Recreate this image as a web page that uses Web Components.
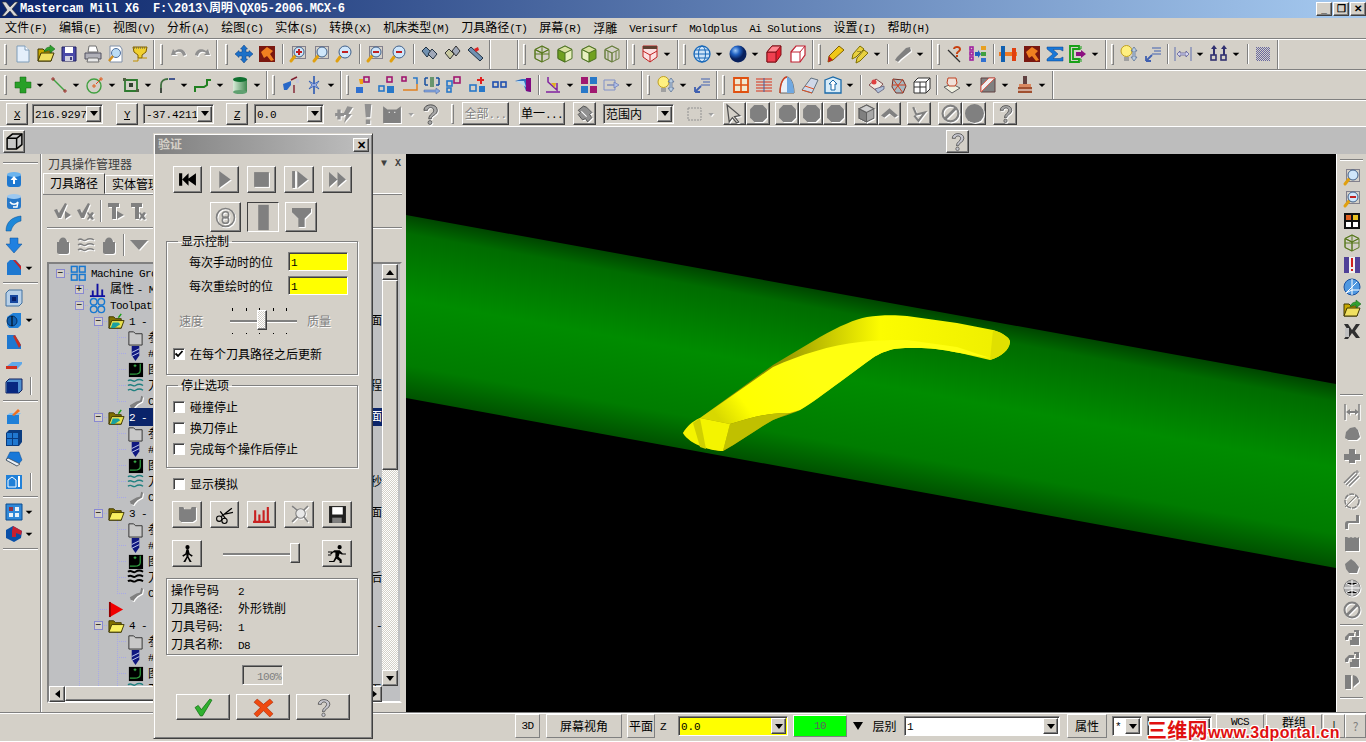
<!DOCTYPE html>
<html>
<head>
<meta charset="utf-8">
<title>Mastercam Mill X6</title>
<style>
  html, body { margin: 0; height: 742px; overflow: hidden; background: #d4d0c8; }
  body { font: 12px/16px "Noto Sans CJK SC", sans-serif; color: #000; }
  #app { display: flex; flex-direction: column; height: 742px; position: relative; }
  .work { display: flex; height: 558px; }
  .row3 { display: flex; align-items: center; }
</style>
</head>
<body>
<div id="app">
  <x-titlebar text="Mastercam Mill X6  F:\2013\周明\QX05-2006.MCX-6"></x-titlebar>
  <x-menubar>
    <x-menu text="文件(F)"></x-menu><x-menu text="编辑(E)"></x-menu><x-menu text="视图(V)"></x-menu><x-menu text="分析(A)"></x-menu><x-menu text="绘图(C)"></x-menu><x-menu text="实体(S)"></x-menu><x-menu text="转换(X)"></x-menu><x-menu text="机床类型(M)"></x-menu><x-menu text="刀具路径(T)"></x-menu><x-menu text="屏幕(R)"></x-menu><x-menu text="浮雕"></x-menu><x-menu text="Verisurf"></x-menu><x-menu text="Moldplus"></x-menu><x-menu text="Ai Solutions"></x-menu><x-menu text="设置(I)"></x-menu><x-menu text="帮助(H)"></x-menu>
  </x-menubar>
  <x-toolrow h="31">
    <x-toolbar items="new open save print preview funnel"></x-toolbar>
    <x-toolbar items="gundo gredo" ml="1"></x-toolbar>
    <x-toolbar items="move fit | zin zwin zmag | zdot zout | bin1 bin2 bin3" ml="3"></x-toolbar>
    <x-toolbar bare w="28"></x-toolbar>
    <x-toolbar items="c1 c2 c3 c4"></x-toolbar>
    <x-toolbar items="cubeR+"></x-toolbar>
    <x-toolbar items="globe+ sphere+ boxR boxW"></x-toolbar>
    <x-toolbar items="pencil pencils+ | gwrench+" w="119"></x-toolbar>
    <x-toolbar items="qline bars | tb1 fit sigma gbox+" w="174"></x-toolbar>
    <x-toolbar items="bulb arrows | dim+ arrowsup+ | dither"></x-toolbar>
  </x-toolrow>
  <x-toolrow h="30">
    <x-toolbar items="plus+ line+ circ+ rectp+ fillet+ spline+ cyl+" w="268"></x-toolbar>
    <x-toolbar items="tool1 star+" w="74"></x-toolbar>
    <x-toolbar items="x1 x2 x3 x4 x5 x6 x7 x8 | corner+ four pale+" pitch="22.7" w="301"></x-toolbar>
    <x-toolbar items="bulb+ arrows" w="75"></x-toolbar>
    <x-toolbar items="gridR lines dome wedge house+ | r1 r2 wire | r3+ r4+ r5+" pitch="23"></x-toolbar>
  </x-toolrow>
  <x-toolrow h="27" last>
    <div class="row3">
      <x-btn text="X" w="22" h="22" style="margin-left:6px" under></x-btn>
      <x-combo value="216.92978" w="71" style="margin-left:4px"></x-combo>
      <x-btn text="Y" w="22" h="22" style="margin-left:13px" under></x-btn>
      <x-combo value="-37.42116" w="71" style="margin-left:5px"></x-combo>
      <x-btn text="Z" w="22" h="22" style="margin-left:12px" under></x-btn>
      <x-combo value="0.0" w="70" style="margin-left:6px"></x-combo>
      <x-icon name="gplus" size="20" style="margin-left:9px;width:22px"></x-icon>
      <x-icon name="gex" size="20" style="margin-left:2px;width:22px"></x-icon>
      <x-icon name="gbox2" size="20" style="margin-left:2px;width:22px"></x-icon>
      <x-icon name="gtri" size="8" style="margin-left:4px"></x-icon>
      <x-icon name="gq" size="22" style="margin-left:4px"></x-icon>
      <x-grip style="margin-left:10px"></x-grip>
      <x-btn text="全部..." w="47" h="23" dis style="margin-left:8px"></x-btn>
      <x-btn text="单一..." w="46" h="23" style="margin-left:10px"></x-btn>
      <x-btn icon="gear" w="23" h="23" style="margin-left:8px"></x-btn>
      <x-combo value="范围内" w="71" style="margin-left:7px"></x-combo>
      <x-icon name="dashed" style="margin-left:12px"></x-icon>
      <x-icon name="gtri" size="8" style="margin-left:3px"></x-icon>
      <x-btn icon="gcursor" w="23" h="23" style="margin-left:8px"></x-btn>
      <x-btn icon="ghex" w="24" h="23"></x-btn>
      <x-btn icon="ghex" w="24" h="23" style="margin-left:5px"></x-btn>
      <x-btn icon="ghex" w="24" h="23"></x-btn>
      <x-btn icon="ghex" w="24" h="23"></x-btn>
      <x-btn icon="gcube" w="24" h="23" style="margin-left:7px"></x-btn>
      <x-btn icon="gup" w="23" h="23"></x-btn>
      <x-btn icon="gcheck" w="24" h="23" style="margin-left:6px"></x-btn>
      <x-btn icon="gstop" w="24" h="23" style="margin-left:7px"></x-btn>
      <x-btn icon="gdot" w="24" h="23"></x-btn>
      <x-btn icon="gq" w="24" h="23" style="margin-left:7px"></x-btn>
    </div>
  </x-toolrow>
  <x-strip>
    <x-btn icon="wirecube" w="22" h="23" style="margin-left:3px"></x-btn>
    <x-btn icon="qq" w="23" h="23" style="margin-left:921px"></x-btn>
  </x-strip>
  <div class="work">
    <x-sidebar w="42" ix="14" top="5" items="- ^ blueup bluerot bluebend bluedown boxred+ - inset disc+ chamfer plate dbox! - lift win flip home! - grid+ redbox+ -"></x-sidebar>
    <x-manager>
      <x-tree-row level="0" exp="-" icon="grid4" label="Machine Group-1"></x-tree-row>
      <x-tree-row level="1" exp="+" icon="chart" label="属性 - Mill"></x-tree-row>
      <x-tree-row level="1" exp="-" icon="circles" label="Toolpath Group-1"></x-tree-row>
      <x-tree-row level="2" exp="-" icon="foldcheck" label="1 -" tail="面"></x-tree-row>
      <x-tree-row level="3" icon="fold" label="参数"></x-tree-row>
      <x-tree-row level="3" icon="drill" label="#1"></x-tree-row>
      <x-tree-row level="3" icon="geom" label="图形"></x-tree-row>
      <x-tree-row level="3" icon="waves" label="刀具路径" tail="程"></x-tree-row>
      <x-tree-row level="3" icon="gtool" label="C" last></x-tree-row>
      <x-tree-row level="2" exp="-" icon="foldcheck" label="2 -" tail=".面" sel></x-tree-row>
      <x-tree-row level="3" icon="fold" label="参数"></x-tree-row>
      <x-tree-row level="3" icon="drill" label="#1"></x-tree-row>
      <x-tree-row level="3" icon="geom" label="图形"></x-tree-row>
      <x-tree-row level="3" icon="waves" label="刀具路径" tail="秒"></x-tree-row>
      <x-tree-row level="3" icon="gtool" label="C" last></x-tree-row>
      <x-tree-row level="2" exp="-" icon="foldopen" label="3 -" tail=".面"></x-tree-row>
      <x-tree-row level="3" icon="fold" label="参数"></x-tree-row>
      <x-tree-row level="3" icon="drill" label="#1"></x-tree-row>
      <x-tree-row level="3" icon="geom" label="图形"></x-tree-row>
      <x-tree-row level="3" icon="wavesk" label="刀具路径" tail="具后"></x-tree-row>
      <x-tree-row level="3" icon="gtool" label="C" last></x-tree-row>
      <x-tree-row level="2" icon="redtri" label=""></x-tree-row>
      <x-tree-row level="2" exp="-" icon="foldopen" label="4 -" tail="-"></x-tree-row>
      <x-tree-row level="3" icon="fold" label="参数"></x-tree-row>
      <x-tree-row level="3" icon="drill" label="#1"></x-tree-row>
      <x-tree-row level="3" icon="geom" label="图形"></x-tree-row>
      <x-tree-row level="3" icon="waves" label="刀具路径" tail="五"></x-tree-row>
    </x-manager>
    <x-viewport></x-viewport>
    <x-sidebar w="30" ix="15" top="2" light items="- ^ zwin zdot colorgrid c1 savered netball open mx ~ - ^ gdim gcloud gplus2 glines gcirc gcorner gsq gblob gball gstop _ gsteps gsteps gdoor ^ - ^ ^ gup"></x-sidebar>
  </div>
  <x-statusbar></x-statusbar>

  <x-dialog text="验证">
    <x-flow gap="8" ml="19" mt="12">
      <x-btn icon="dfirst" w="29" h="27"></x-btn><x-btn icon="dplay" w="29" h="27"></x-btn><x-btn icon="dstop" w="29" h="27"></x-btn><x-btn icon="dstep" w="30" h="27"></x-btn><x-btn icon="dff" w="30" h="27"></x-btn>
    </x-flow>
    <x-flow gap="6" ml="56" mt="9">
      <x-btn icon="dspiral" w="31" h="30"></x-btn><x-btn icon="dbar" w="32" h="30" pressed></x-btn><x-btn icon="dfun" w="32" h="30"></x-btn>
    </x-flow>
    <x-group text="显示控制" h="140" mt="3">
      <x-field text="每次手动时的位" value="1" mt="5"></x-field>
      <x-field text="每次重绘时的位" value="1" mt="5"></x-field>
      <x-flow ml="6" mt="13" gap="0" center>
        <x-label text="速度" dis w="51"></x-label><x-slider w="67" thumb="27" ticks></x-slider><x-label text="质量" dis ml="10"></x-label>
      </x-flow>
      <x-check text="在每个刀具路径之后更新" checked mt="12"></x-check>
    </x-group>
    <x-group text="停止选项" h="89" mt="4">
      <x-check text="碰撞停止" mt="8"></x-check>
      <x-check text="换刀停止" mt="5"></x-check>
      <x-check text="完成每个操作后停止" mt="5"></x-check>
    </x-group>
    <x-check text="显示模拟" mt="8" ml="19"></x-check>
    <x-flow gap="8" ml="18" mt="9">
      <x-btn icon="dstock" w="30" h="27"></x-btn><x-btn icon="dscis" w="29" h="27"></x-btn><x-btn icon="dhist" w="29" h="27"></x-btn><x-btn icon="dmag" w="30" h="27"></x-btn><x-btn icon="dsave" w="30" h="27"></x-btn>
    </x-flow>
    <x-flow ml="18" mt="12" center>
      <x-btn icon="dwalk" w="30" h="27"></x-btn><x-slider w="77" thumb="67" big style="margin-left:21px"></x-slider><x-btn icon="drun" w="30" h="27" style="margin-left:22px"></x-btn>
    </x-flow>
    <x-infobox>
      <x-info k="操作号码" v="2"></x-info>
      <x-info k="刀具路径:" v="外形铣削"></x-info>
      <x-info k="刀具号码:" v="1"></x-info>
      <x-info k="刀具名称:" v="D8"></x-info>
    </x-infobox>
    <x-progress text="100%"></x-progress>
    <x-flow gap="6" ml="22" mt="9">
      <x-btn icon="ok" w="54" h="26"></x-btn><x-btn icon="cancel" w="54" h="26"></x-btn><x-btn icon="qq" w="54" h="26"></x-btn>
    </x-flow>
  </x-dialog>
</div>

<script>
const RAISED = 'border:1px solid;border-color:#fff #404040 #404040 #fff;box-shadow:inset -1px -1px #808080;box-sizing:border-box;background:#d4d0c8;';
const SUNK = 'border:1px solid;border-color:#808080 #fff #fff #808080;box-shadow:inset 1px 1px #404040;box-sizing:border-box;';
const MONO = `.l{font:11px/16px "Liberation Mono",monospace;letter-spacing:-.6px}`;

// ascii runs are 6px wide in the original bitmap font
const T = s => s.replace(/[\x21-\x7e]+( [\x21-\x7e]+)*/g, m => `<span class="l">${m}</span>`);

const P = (d, f, s = 'none', w = 1) => `<path d="${d}" fill="${f}" stroke="${s}" stroke-width="${w}"/>`;
const G = '#808080';
const mag = (cx, cy, r, inner = '') =>
  `<path d="M${cx-r+1} ${cy+r-1}L2 16" stroke="#e0a010" stroke-width="3" stroke-linecap="round"/>` +
  `<circle cx="${cx}" cy="${cy}" r="${r}" fill="#cfe6fa" stroke="#40608a"/>` + inner;
const dots = '<rect x="3.5" y="1.5" width="13" height="12" fill="none" stroke="#303050" stroke-dasharray="1 1"/>';
const cube = (st, top, l, r) =>
  P('M9 1l7 3.5v9L9 17l-7-3.5v-9z', r, st) + P('M2 4.5L9 8v9l-7-3.5z', l, st) + P('M9 1l7 3.5L9 8 2 4.5z', top, st);
const sq = (x, y, c, s = 6) => `<rect x="${x}" y="${y}" width="${s}" height="${s}" fill="none" stroke="${c}" stroke-width="1.6"/>`;
const fill = (x, y, c, w = 7, h = 7) => `<rect x="${x}" y="${y}" width="${w}" height="${h}" fill="${c}"/>`;
const hex = P('M5 1h8l4 4v8l-4 4H5l-4-4V5z', G);
const folder = (a, b) => P('M1 4h5l2 2h6v10H1z', a, '#403800') + P('M4 8h13l-3 8H1z', b, '#403800');
const ques = c => P('M4 6c0-6 11-6 11 0 0 4-5 4-5 7h-2c0-4 4-4 4-7 0-3-5-3-5 0z', c, '#404040', .7) + `<circle cx="9" cy="16" r="1.6" fill="${c}" stroke="#404040" stroke-width=".6"/>`;
const person = 'M9 1a2 2 0 110 4 2 2 0 010-4zM8 5h2l1 4 3 2-1 1-3-2v2l3 5h-2l-2-4-2 4H5l3-5v-2l-3 2-1-1 3-2z';

const ICONS = {
  new: P('M3 1h8l4 4v12H3z', '#e4effb', '#7f9db9') + P('M11 1v4h4', '#fff', '#7f9db9'),
  open: folder('#c8a800', '#f0e060') + P('M7 7c1-4 4-5 6-5V0l5 4-5 4V5c-2 0-4 1-6 2z', '#30a030', '#106010', .5),
  save: P('M2 2h14v14H2z', '#4a4aa8', '#202060') + fill(5, 2, '#fff', 8, 6) + fill(5, 11, '#d0d0e0', 8, 5) + fill(10, 12, '#404080', 2, 3),
  print: P('M5 1h7l2 6H4z', '#fff', '#707070') + P('M1 8h16v6H1z', '#b0b0b8', '#505060') + P('M4 13h10l1 4H3z', '#e8e8e8', '#707070'),
  preview: P('M3 1h10l2 3v13H3z', '#fff', '#8090a8') + `<circle cx="9" cy="8" r="4.5" fill="#bcdcf4" stroke="#5070a0"/><path d="M6 11l-4 5" stroke="#d09020" stroke-width="2.5"/>`,
  funnel: P('M2 2h14l-1 5-4 3v3H7v-3L3 7z', '#f0d030', '#806000') + '<path d="M7 13v3H2M11 13h5" stroke="#c09000" fill="none"/><path d="M3 3h12" stroke="#505050" stroke-dasharray="1 1"/>',
  gundo: P('M3 4l-2 6 6 0-2-2c3-2 7-2 8 3l3-1c-1-6-7-7-11-4z', '#909090'),
  gredo: P('M15 4l2 6-6 0 2-2c-3-2-7-2-8 3l-3-1c1-6 7-7 11-4z', '#909090'),
  move: P('M9 0l3.5 4H11v3h3V5.500l4 3.500-4 3.500V11h-3v3h1.500L9 18l-3.500-4H7v-3H4v1.500L0 9l4-3.500V7h3V4H5.500z', '#1c70c8', '#0a3c80', .5),
  fit: fill(1, 1, '#7a1810', 16, 16) + P('M3 7l6-5 6 4-3 3 4 6-3 1-4-5-3 2z', '#f08020'),
  zin: dots + mag(10, 7, 5, fill(7, 6, '#c02020', 6, 2) + fill(9, 4, '#c02020', 2, 6)),
  zwin: dots + mag(10, 7, 5),
  zmag: mag(10, 7, 6, fill(7, 6, '#c02020', 6, 2)),
  zdot: dots + mag(10, 7, 5, fill(7, 6, '#c02020', 6, 2)),
  zout: mag(10, 7, 6, fill(7, 6, '#c02020', 6, 2)),
  bin1: P('M2 6l4-4 5 5-4 5z', '#7090b0', '#203040') + P('M8 9l4-5 5 5-4 5z', '#a0a8b8', '#203040'),
  bin2: P('M2 8l4-4 5 5-4 5z', '#c8c8a0', '#303030') + P('M9 6l4-5 4 5-4 5z', '#a0a8b8', '#303030'),
  bin3: P('M2 5l3-3 12 11-3 3z', '#7090b0', '#203040') + P('M8 4l4-2 1 3-3 2z', '#e02020'),
  c1: cube('#5a7a20', 'none', 'none', 'none') + '<path d="M9 8v9M2 4.500l7 3.500 7-3.500M2 9l14 0M9 1v7" stroke="#5a7a20" fill="none"/>',
  c2: cube('#4a7020', '#d8e0a0', '#70a020', '#e8f0c0'),
  c3: cube('#4a7020', '#d8e0a0', '#e8f0c0', '#70a020'),
  c4: cube('#6a8040', 'none', 'none', 'none') + '<path d="M9 8v9M5 6v9M13 6v9" stroke="#6a8040" fill="none"/>',
  cubeR: P('M2 1h14v11l-7 5-7-5z', '#fbe0e0', '#c02020') + fill(2, 1, '#604030', 14, 3) + '<path d="M2 6l7 4 7-4M9 10v7" stroke="#c02020" fill="none"/>',
  globe: '<circle cx="9" cy="9" r="8" fill="#cfe4f8" stroke="#1868b8" stroke-width="1.3"/><ellipse cx="9" cy="9" rx="3.500" ry="8" fill="none" stroke="#1868b8"/><path d="M1 9h16M2 5h14M2 13h14" stroke="#1868b8"/>',
  sphere: '<defs><radialGradient id="sph" cx=".35" cy=".3"><stop offset="0" stop-color="#9cc8f8"/><stop offset=".5" stop-color="#2060c0"/><stop offset="1" stop-color="#08205c"/></radialGradient></defs><circle cx="9" cy="9" r="8.500" fill="url(#sph)"/>',
  boxR: P('M2 7l5-6h9v9l-5 7H2z', '#e82030', '#801018') + P('M2 7h9v10H2z', '#f04050', '#801018') + P('M7 1h9l-5 6H2z', '#ff8890', '#801018'),
  boxW: P('M2 7l5-6h9v9l-5 7H2z', '#fff', '#c02030', 1.2) + '<path d="M2 7h9v10M11 7l5-6" stroke="#c02030" fill="none"/>',
  pencil: P('M12 1l5 4L6 15l-5 2 1-6z', '#f0c818', '#806000') + P('M1 17l1-6 4 4z', '#c02020'),
  pencils: P('M9 1l4 3L5 12l-4 2 1-5z', '#e8d040', '#807000') + P('M13 5l4 3-8 8-4 2 1-5z', '#e8d040', '#807000') + fill(6, 6, '#a09030', 5, 1),
  gwrench: P('M16 2l1 4-10 8-3 3-3-2 2-3 9-9z', G),
  qline: '<path d="M2 5l12 12" stroke="#303030" stroke-width="1.2"/>' + P('M7 4c0-4 8-4 8 0 0 3-3 3-3 5h-2c0-3 3-3 3-5 0-1.500-4-1.500-4 0z', '#c84010') + fill(10, 10, '#c84010', 2, 2),
  bars: sq(1, 2, '#a020a0', 3) + sq(1, 7, '#a020a0', 3) + sq(1, 12, '#a020a0', 3) + fill(12, 1, '#e8a020', 5, 4) + fill(12, 7, '#40a040', 5, 4) + fill(12, 13, '#3070d0', 5, 4) + P('M6 7h3V5l3 4-3 4v-2H6z', '#2060c0'),
  tb1: fill(0, 7, '#f07820', 18, 4) + fill(2, 1, '#1060b0', 4, 16) + fill(13, 3, '#e04010', 4, 13),
  sigma: P('M1 2h16v4l-3-1.500H7l5 4.500-5 4.500h7l3-1.500v4H1v-2l6-5-6-5z', '#1878d8', '#0a4088', .5),
  gbox: P('M1 1h9v3H4v10h6v3H1z', 'none', '#18a018', 1.8) + P('M6 4h6V1M6 14h6v3', 'none', '#18a018') + P('M7 7h5V5l5 4-5 4v-2H7z', '#8c1080'),
  bulb: '<circle cx="6.500" cy="6" r="5.500" fill="#fff080" stroke="#c0a020"/>' + fill(4, 12, '#a0a0a0', 5, 4) + P('M14 2l3 4h-2v6h2l-3 4-3-4h2V6h-2z', '#b8cce0', '#506890', .7),
  arrows: P('M2 16l6-6M2 16v-5M2 16h5', 'none', '#4060b0', 1.8) + '<path d="M8 3h9M10 6h7M8 9h9" stroke="#4060b0"/>',
  dim: '<path d="M1 2v14M17 2v14" stroke="#6070b0"/>' + P('M3 9l3-3v2h6V6l3 3-3 3v-2H6v2z', '#d8d8f0', '#505090', .7),
  arrowsup: sq(1, 10, '#303070', 5) + sq(11, 10, '#303070', 5) + P('M4 0l3 4H5v6H3V4H1zM14 0l3 4h-2v6h-2V4h-2z', '#303070'),
  dither: '<rect x="2" y="2" width="14" height="14" fill="url(#dth)"/><defs><pattern id="dth" width="2" height="2" patternUnits="userSpaceOnUse"><rect width="1" height="1" fill="#6868a0"/><rect x="1" y="1" width="1" height="1" fill="#6868a0"/></pattern></defs>',

  plus: P('M6 1h6v5h5v6h-5v5H6v-5H1V6h5z', '#28a028', '#106010', .5),
  line: '<path d="M3 3l12 12" stroke="#40a040" stroke-width="1.4"/><path d="M1 3h4M3 1v4M13 15h4M15 13v4" stroke="#a03030"/>',
  circ: '<circle cx="8" cy="10" r="7" fill="none" stroke="#40a040" stroke-width="1.4"/><path d="M10 8l5-5" stroke="#e04020"/><path d="M13 3h4M15 1v4M6 10h4M8 8v4" stroke="#e06020"/>',
  rectp: P('M3 4h12v11H3z', 'none', '#2f7a30', 1.8) + fill(7, 7, '#304030', 4, 4) + fill(1, 2, '#506040', 3, 3) + fill(14, 13, '#506040', 3, 3),
  fillet: P('M3 17V9c0-4 3-6 7-6', 'none', '#407040', 1.8) + '<path d="M11 3h6" stroke="#203880" stroke-width="1.6"/><path d="M3 12v5" stroke="#404040" stroke-width="1.6"/>',
  spline: P('M1 16v-5h9l3-2V4h4', 'none', '#208020', 2),
  cyl: '<rect x="2" y="3" width="14" height="13" fill="url(#cyg)"/><ellipse cx="9" cy="16" rx="7" ry="2" fill="#60a070"/><ellipse cx="9" cy="3.500" rx="7" ry="2.500" fill="#107030"/><defs><linearGradient id="cyg"><stop offset="0" stop-color="#d8ecd8"/><stop offset="1" stop-color="#408850"/></linearGradient></defs>',
  tool1: P('M1 8l8-3v4l-4 5H2z', '#2868c8') + '<path d="M9 4l6-3M12 9v8" stroke="#802030" stroke-width="1.4"/>' + fill(14, 3, '#c8c8d8', 3, 4),
  star: '<path d="M9 0v18" stroke="#2050b0" stroke-width="1.5"/>' + P('M4 5l5 3 5-3-3 4 3 4-5-3-5 3 3-4z', '#a8b8e8', '#2050b0', .7),
  x1: sq(9, 1, '#a01870', 5) + fill(1, 11, '#3070d0', 7, 6) + P('M4 3h4v5H5z', '#f0a010'),
  x2: sq(9, 1, '#a01870', 5) + sq(1, 10, '#2878c8', 5) + fill(9, 10, '#2878c8', 7, 7),
  x3: sq(1, 1, '#a01870', 4) + P('M12 2h4v6', 'none', '#2878c8', 1.5) + P('M2 14h14V8', 'none', '#e08020', 1.5),
  x4: '<path d="M8 1v10M10 1v10" stroke="#207030" stroke-width="1.2"/>' + P('M2 2h3M2 9h3M2 2v7M16 2h-3M16 9h-3M16 2v7', 'none', '#1850a0', 1.5) + P('M1 14h12v-2l4 3-4 3v-2H1z', '#88a8e0', '#4060a0', .5),
  x5: sq(8, 1, '#a01870', 6) + sq(1, 5, '#2878c8', 5) + sq(1, 12, '#2878c8', 4),
  x6: sq(1, 9, '#2878c8', 6) + fill(10, 10, '#2878c8', 6, 6) + fill(11, 1, '#e02020', 2, 7) + fill(8, 3, '#e02020', 7, 2),
  x7: sq(2, 6, '#2050b0', 5) + sq(10, 6, '#2050b0', 5),
  x8: P('M1 5l7-2h9v13l-5-1-3-8z', '#3070c0') + P('M12 2h5v14l-5-1z', '#800880') + P('M2 5h8l2 6z', '#b8d8f0'),
  corner: P('M4 1v5l9 8V7', 'none', '#8020a0', 1.5) + P('M2 16h14', 'none', '#8020a0', 1.5) + P('M7 7h5l-1 5z', '#e0b020'),
  four: fill(1, 1, '#a01870') + fill(10, 1, '#2878c8') + fill(1, 10, '#2878c8') + fill(10, 10, '#a01870'),
  pale: P('M1 4h11v10H1z', 'none', '#8090c8', 1) + P('M4 9h7V6l5 3-5 3V9z', '#b0c0e8', '#6878b8', .7),
  gridR: P('M2 2h14v14H2z', '#f0e8d0', '#e05010', 1.8) + '<path d="M9 2v14M2 9h14" stroke="#e05010" stroke-width="1.6"/>',
  lines: '<path d="M1 3h16M1 6h16M1 9h16M1 12h16M1 15h16" stroke="#d83018" stroke-width="1.1"/><path d="M9 2v14" stroke="#4060a0"/>',
  dome: P('M2 17C2 6 6 1 9 1s7 5 7 16z', '#e8f0f8', '#303030', .7) + P('M9 1c3 0 7 5 7 16H9z', '#70a8e0') + P('M2 17C2 6 6 1 9 1', 'none', '#d04020', 1.4),
  wedge: P('M1 14l9-12 7 2-6 13z', '#d0d8e8', '#607080') + '<path d="M1 14l10 3M4 10l9 3" stroke="#e05020"/>',
  house: P('M1 4l8-3 8 3v13H1z', '#d8ecf8', '#1868a8', 1.3) + P('M9 4l4 4h-2v6H7V8H5z', '#fff', '#1868a8'),
  r1: P('M2 9l7-6 7 5-6 7z', '#f0e8e0', '#805050') + '<circle cx="7" cy="6" r="2.500" fill="#e04040"/>' + P('M8 13l9-3v3l-6 4z', '#b0c0d8', '#505070', .7),
  r2: P('M3 3l10 1 3 6-3 7H6l-4-6z', '#a8b8c0', '#703028') + '<path d="M3 3l10 14M13 3L4 15M2 9l14 0" stroke="#d04020"/>',
  wire: P('M1 6l4-4h12v11l-4 4H1z', '#fff', '#303030') + '<path d="M1 6h12v11M13 6l4-4M7 6v11M1 11h12" stroke="#303030" fill="none"/>',
  r3: P('M1 11l8-3 8 4-8 5z', '#f0f0e0', '#606060') + P('M5 2h8l1 5-2 3H6L4 7z', '#f0e0d8', '#c04020'),
  r4: P('M2 2h14v14H2z', G, '#604040') + P('M2 10L10 2h6L2 16z', '#f0f0f0', '#e06050'),
  r5: fill(7, 0, '#604040', 4, 8) + fill(3, 8, '#d88860', 12, 3) + fill(2, 11, '#a05030', 14, 6) + '<path d="M2 14h14" stroke="#fff"/>',

  gplus: P('M1 8h2V5h3v3h3v3H6v3H3v-3H1zM12 2l5 1-4 6h3l-7 8 2-7H8z', '#909090'),
  gex: P('M6 0h6l-1 12H7zM7 14h4v4H7z', '#909090'),
  gbox2: P('M1 2l4 3h8l4-3v15H1z', G) + fill(6, 7, '#fff', 1, 1) + fill(11, 7, '#fff', 1, 1),
  gtri: '<path d="M3 7h12l-6 7z" fill="#a0a0a0"/>',
  arrow: '<path d="M4 7h10l-5 5z" fill="#000"/>',
  qq: ques('#c8c8d0'),
  gq: ques('#a8a8a8'),
  gear: P('M3 6l5-4 3 1 5 5-2 2 2 3-4 4-2-3-3 1-4-5 2-2z', '#909090', '#404040', .8) + '<path d="M6 7l5 5" stroke="#fff"/>',
  dashed: '<rect x="2" y="3" width="13" height="12" fill="none" stroke="#909090" stroke-dasharray="2 1"/>',
  gcursor: P('M2 1l12 10-5 1 4 5-2 1-4-5-3 4z', '#d4d0c8', '#505050', 1.2),
  ghex: hex,
  gcube: cube('#606060', '#d0d0d0', G, '#a8a8a8'),
  gup: P('M9 4l8 7-3 2-5-4-5 4-3-2z', G),
  gcheck: P('M3 3l3 7 8-2-6 8-4-5', 'none', G, 2),
  gstop: `<circle cx="9" cy="9" r="7.500" fill="none" stroke="${G}" stroke-width="2"/><path d="M4 14L14 4" stroke="${G}" stroke-width="2.500"/>`,
  gdot: `<circle cx="9" cy="9" r="9" fill="${G}"/>`,
  gchk1: P('M0 8l3-1 2 4 6-10 2 1-6 14H4z', G) + P('M11 9l6 4-6 4z', G),
  gchk2: P('M0 8l3-1 2 4 6-10 2 1-6 14H4z', G) + P('M11 10l2 2 2-2 2 1-2 3 2 3-2 1-2-2-2 2-1-1 2-3-2-3z', G),
  gT1: P('M1 1h11v4H9v12H5V5H1z', G) + P('M10 9l7 4-7 4z', G),
  gT2: P('M1 1h11v4H9v12H5V5H1z', G) + P('M10 10l2 2 2-2 2 1-2 3 2 3-2 1-2-2-2 2-1-1 2-3-2-3z', G),
  glock: P('M5 6c0-6 8-6 8 0h2v10c0 1-1 2-2 2H5c-1 0-2-1-2-2V6z', G),
  gwav: '<path d="M1 4c4-3 5 2 8 0s5-2 8 0M1 9c4-3 5 2 8 0s5-2 8 0M1 14c4-3 5 2 8 0s5-2 8 0" fill="none" stroke="#808080" stroke-width="1.500"/>',
  gdown: P('M0 4h18l-9 10z', G),
  wirecube: P('M2 6l5-4h9v10l-5 4H2z', '#c8c8c8', '#000', 1.4) + '<path d="M2 6h9v10M11 6l5-4" stroke="#000" fill="none" stroke-width="1.4"/>',

  blueup: `<rect x="2" y="3" width="14" height="13" rx="3" fill="#1e78d0"/><ellipse cx="9" cy="3.500" rx="7" ry="2.500" fill="#6cb4ee"/>` + P('M9 5l3.500 4H10v4H8V9H5.500z', '#fff'),
  bluerot: `<rect x="2" y="3" width="14" height="13" rx="3" fill="#2878c8"/><ellipse cx="9" cy="3.500" rx="7" ry="2.500" fill="#9cc8f0"/>` + P('M5 9c2 3 6 3 8 0l-1 5-4 0', 'none', '#fff', 1.4),
  bluebend: P('M1 16C1 7 7 2 16 1v5c-5 1-9 5-10 10z', '#1e88d8', '#0a4c90', .5),
  bluedown: P('M5 1h8v6h4l-8 9-8-9h4z', '#2080e0', '#0a4c90', .5),
  boxred: P('M2 4l3-3h6l5 6v9H2z', '#1e78d0') + P('M10 1l6 6v4l-2-3-6-7z', '#d02020'),
  inset: P('M1 4l3-3h13v13l-3 3H1z', '#b8d0e8', '#4070a0') + fill(5, 6, '#1848a0', 8, 8) + fill(7, 8, '#08206a', 4, 4),
  disc: P('M2 6l6-4 8 0v12l-3 3H4l-2-3z', '#2080d8') + '<circle cx="7" cy="10" r="5" fill="#1060b0" stroke="#0a3060"/><path d="M7 5v10" stroke="#000"/>',
  chamfer: P('M2 2h8l6 10v4H2z', '#1e78d0') + P('M10 2l6 10-2 3-6-12z', '#c83020'),
  plate: P('M1 12l6-5h10v2l-5 5H1z', '#60a8e8') + P('M1 11h11v3H1z', '#d03020'),
  dbox: P('M1 5l3-3h13v11l-3 3H1z', '#5090d0', '#102060') + fill(2, 5, '#082880', 11, 11),
  lift: P('M2 8h12v9H2z', '#2080d8') + P('M2 8l3-2h11l-2 2z', '#80c0f0') + P('M7 8l6-6 2 2-6 5z', '#f07020'),
  win: P('M1 4l3-3h13v12l-3 4H1z', '#0a3c80') + fill(2, 4, '#2078d0', 5, 5) + fill(8, 4, '#2078d0', 5, 5) + fill(2, 10, '#2078d0', 5, 6) + fill(8, 10, '#2078d0', 5, 6),
  flip: P('M5 1h9l3 8-5 6-11-6z', '#1878d8', '#0a4c90', .5) + P('M1 9l11 6 3-2-12-6z', '#e8f0f8', '#404040', .7),
  home: P('M1 2h16v14H1z', '#2080d8') + P('M3 7l4-3 4 3v7H3z', 'none', '#fff') + '<path d="M14 3v11" stroke="#fff" stroke-width="2"/>',
  grid: P('M1 1h16v16H1z', '#3088d8', '#0a4c90') + fill(4, 4, '#903040', 4, 4) + fill(10, 4, '#e8f0f8', 4, 4) + fill(4, 10, '#e8f0f8', 4, 4) + fill(10, 10, '#e8f0f8', 4, 4),
  redbox: P('M1 5l7-4 9 5-1 7-7 4-8-4z', '#0a50a8') + P('M8 1l9 5-1 4-5-2v4H7V6z', '#c82030'),

  colorgrid: fill(1, 1, '#101010', 16, 16) + fill(3, 3, '#e06020', 5, 5) + fill(10, 3, '#e8c020', 5, 5) + fill(3, 10, '#fff', 5, 5) + fill(10, 10, '#fff', 5, 5),
  savered: P('M1 1h16v16H1z', '#504098') + fill(6, 1, '#f0f0f0', 6, 16) + fill(8, 2, '#d02020', 2, 9) + fill(8, 13, '#d02020', 2, 2),
  netball: '<circle cx="9" cy="9" r="8" fill="#5098e0" stroke="#1850a0"/><path d="M9 1v16M3 15L14 4M9 12h8M9 12L3 15" stroke="#fff"/>',
  mx: P('M1 2h4l4 6 4-6h4l-5 7 5 7h-4L9 11l-4 6H1l5-7z', '#303030') + fill(2, 6, '#c0c0c0', 4, 9),
  gdim: `<path d="M2 1v16M16 1v16" stroke="${G}" stroke-width="1.5"/>` + P('M3 9l4-3v2h5V6l4 3-4 3v-2H7v2z', G),
  gcloud: P('M2 13l1-6 4-4 5-1 3 3 2 7-3 3H5z', G),
  gplus2: P('M6 2h6v5h5v6h-5v3H6v-3H1V7h5z', G),
  glines: `<path d="M1 14L12 3M3 16L14 5M6 17L16 7" stroke="${G}" stroke-width="1.5"/><path d="M14 1v4M12 3h4" stroke="${G}"/>`,
  gcirc: `<circle cx="9" cy="10" r="7" fill="none" stroke="${G}" stroke-width="1.500" stroke-dasharray="5 1"/><path d="M2 16L14 4" stroke="${G}"/>`,
  gcorner: P('M2 16v-5c0-2 1-3 3-3h8V2h3v8H6c-1 0-1 1-1 2v4z', G),
  gsq: `<path d="M2 2h2l2 1 2-1 2 1 2-1 2 1 2-1v14H2z" fill="${G}"/>`,
  gblob: P('M2 7l6-5 4 3 4 5-2 6H6L3 12z', G),
  gball: `<circle cx="9" cy="9" r="8" fill="#b0b0b0" stroke="${G}"/><path d="M1 9h16M9 1v16M3 4c4 3 8 3 12 0M3 14c4-3 8-3 12 0" stroke="#fff"/>`,
  gsteps: P('M2 9l4-4 5 0v3H6L5 12H2zM9 9h7v8H7V12h2zM11 2h5v6h-3V4h-2z', G),
  gdoor: P('M2 3h6v14H2zM10 3c4 1 6 4 6 7l-6 5z', G),

  grid4: sq(1.500, 1.500, '#1878d0', 6) + sq(10, 1.500, '#1878d0', 6) + sq(1.500, 10, '#1878d0', 6) + sq(10, 10, '#1878d0', 6),
  chart: '<path d="M1 16h16M4 16V10M9 16V3M14 16V9" stroke="#1010a0" stroke-width="2"/>',
  circles: '<g fill="none" stroke="#1878d0" stroke-width="1.500"><circle cx="5" cy="5" r="3.500"/><circle cx="13" cy="5" r="3.500"/><circle cx="5" cy="13" r="3.500"/><circle cx="13" cy="13" r="3.500"/></g>',
  foldopen: folder('#807000', '#f8f060'),
  foldcheck: folder('#807000', '#e8e050') + P('M5 10h6l2 2-6 4H3z', '#18a0a0') + '<path d="M11 5l3-4" stroke="#18a018" stroke-width="1.500"/>',
  fold: P('M2 3h5l2 2h7v12H2z', '#c8c8c8', '#303030'),
  drill: P('M5 1h8v10l-4 6-4-6z', '#101880') + '<path d="M5 8l8-4M5 12l8-4" stroke="#c8d0f0"/>',
  geom: fill(2, 2, '#000', 15, 15) + P('M14 3v7c0 3-3 4-6 4H3', 'none', '#30a040', 1.300) + P('M7 5h3M8.500 3.500v3', 'none', '#40c050'),
  waves: '<path d="M1 4c4-3 5 2 8 0s5-2 8 0M1 9c4-3 5 2 8 0s5-2 8 0M1 14c4-3 5 2 8 0s5-2 8 0" fill="none" stroke="#208080" stroke-width="1.500"/>',
  wavesk: '<path d="M1 3c4-3 5 2 8 0s5-2 8 0M1 8c4-3 5 2 8 0s5-2 8 0M1 13c4-3 5 2 8 0s5-2 8 0" fill="none" stroke="#000" stroke-width="2"/>',
  gtool: P('M3 13l7-4 4-1 1-5 2 1-1 5-5 3-3 3-1 2-3-1z', G),
  redtri: P('M2 1l14 8-14 8z', '#f00000') + fill(1, 1, '#900000', 2, 16),

  dfirst: P('M1 3h3v12H1zM4 9l6-6v5l7-5v12l-7-5v5z', '#000'),
  dplay: P('M4 1l11 8-11 8z', G),
  dstop: fill(2, 2, G, 14, 14),
  dstep: fill(2, 1, G, 3, 16) + fill(5, 1, '#fff', 1, 16) + P('M7 1l10 8-10 8z', G),
  dff: P('M1 2l8 7V2l8 7-8 7V9l-8 7z', G),
  dspiral: `<g fill="none" stroke="${G}" stroke-width="1.500"><circle cx="9" cy="9" r="8.500"/><circle cx="9" cy="6.500" r="3"/><circle cx="9" cy="11.500" r="3"/></g>`,
  dbar: fill(4, -3, G, 10, 24),
  dfun: P('M0 0h18v4l-6 6v8H6v-8L0 4z', G),
  dstock: P('M1 2h4l1 2 6 0 1-2h4v12l-3 2H3l-2-2z', G),
  dscis: '<g fill="none" stroke="#000"><circle cx="4" cy="13" r="2.500"/><circle cx="9" cy="15" r="2.500"/><path d="M6 11L16 3M10 13L5 6M8 9l9-2" stroke-width="1.200"/></g>',
  dhist: '<path d="M1 16h16M3 15V5M7 15V9M11 15V5M15 15V2" stroke="#c82020" stroke-width="2"/>',
  dmag: `<circle cx="10" cy="8" r="4.500" fill="#e8e8e8" stroke="${G}"/><path d="M2 16l5-5M13 11l4 5M2 1l5 4M17 1l-4 4" stroke="${G}" stroke-width="1.500"/>`,
  dsave: P('M1 1h16v16H1z', '#202020') + fill(4, 2, '#fff', 10, 7) + fill(4, 12, '#808080', 9, 5),
  dwalk: P(person, '#000'),
  drun: P('M11 1a2 2 0 110 4 2 2 0 010-4zM6 6h5l3 3h3v1h-4l-2-1-1 3 3 3v3h-2v-2l-3-2-2 3H1v-1h4l2-4 0-4-2 0-2 2-1-1zM0 7h4v1H0zM0 10h3v1H0z', '#000'),
  ok: P('M1 9l3-2 3 4 8-10 2 1-9 15h-2z', '#30b030', '#107010', .7),
  cancel: P('M3 1l6 5 6-5 3 3-6 5 6 6-3 3-6-6-6 6-3-3 6-6-6-5z', '#ef4a10', '#a02000', .5)
};

const NOT_GREY = ['gbox', 'grid', 'gridR', 'grid4', 'geom', 'globe'];

class Base extends HTMLElement {
  get A() { return n => this.getAttribute(n); }
  render(html) { if (!this.shadowRoot) this.attachShadow({ mode: 'open' }); this.shadowRoot.innerHTML = html; }
}

class XIcon extends Base {
  connectedCallback() {
    const n = this.A('name'), s = this.A('size') || 18;
    const dis = (/^g/.test(n) && !NOT_GREY.includes(n)) || /^d(play|stop|step|ff|spiral|fun|stock|mag)/.test(n);
    this.render(`<style>
      :host{display:inline-flex;align-items:center;justify-content:center;flex:none}
      svg{display:block;overflow:visible;${dis ? 'filter:drop-shadow(1px 1px 0 #fff)' : ''}}
    </style><svg width="${s}" height="${s}" viewBox="0 0 18 18">${ICONS[n] || ''}</svg>`);
  }
}

class XTitlebar extends Base {
  connectedCallback() {
    this.render(`<style>
      :host{display:flex;align-items:center;height:18px;flex:none;background:linear-gradient(90deg,#0a246a,#a6caf0);color:#fff}
      .x{width:20px;display:flex;justify-content:center}
      .t{font:bold 12px/18px "Liberation Mono","Noto Sans CJK SC",monospace;letter-spacing:-.2px;white-space:pre;flex:1}
      .b{width:16px;height:14px;margin-right:1px;${RAISED}font:bold 10px/12px "Liberation Sans",sans-serif;color:#000;text-align:center}
    </style>
    <div class="x"><svg width="18" height="16" viewBox="0 0 18 16"><path d="M1 1h4l4 5 5-5h3l-6 7 6 7h-4L9 10l-5 5H1l5-6z" fill="#d8d8d8" stroke="#303030" stroke-width=".6"/></svg></div>
    <div class="t">${this.A('text')}</div>
    <div class="b">_</div><div class="b" style="line-height:11px">❐</div><div class="b" style="margin-right:0">✕</div>`);
  }
}

class XMenubar extends Base {
  connectedCallback() {
    this.render(`<style>
      :host{display:flex;height:20px;flex:none;align-items:center;border-bottom:1px solid #808080;box-sizing:content-box}
    </style><slot></slot>`);
  }
}

class XMenu extends Base {
  connectedCallback() {
    this.render(`<style>${MONO}
      :host{display:block;padding:0 6px;white-space:nowrap;line-height:18px}
      :host(:first-child){padding-left:5px}
      .l{line-height:18px}
    </style>${T(this.A('text'))}`);
  }
}

class XToolrow extends Base {
  connectedCallback() {
    const h = this.A('h');
    this.render(`<style>
      :host{display:flex;height:${h}px;flex:none;box-sizing:border-box;border-top:1px solid #fff;position:relative;
        ${this.hasAttribute('last') ? 'border-bottom:1px solid #fff' : 'border-bottom:1px solid #808080'}}
    </style><slot></slot>`);
  }
}

class XGrip extends Base {
  connectedCallback() {
    this.render(`<style>:host{display:block;flex:none;width:3px;height:20px;border:1px solid;border-color:#fff #808080 #808080 #fff;box-sizing:border-box}</style>`);
  }
}

class XToolbar extends Base {
  connectedCallback() {
    const items = (this.A('items') || '').split(' ').filter(Boolean);
    const html = items.map(i => {
      if (i === '|') return '<i class="sep"></i>';
      if (i.endsWith('+')) return `<span class="dd"><x-icon name="${i.slice(0, -1)}"></x-icon><x-icon name="arrow" size="12"></x-icon></span>`;
      return `<span class="it"><x-icon name="${i}"></x-icon></span>`;
    }).join('');
    const bare = this.hasAttribute('bare');
    this.render(`<style>
      :host{display:flex;align-items:center;flex:none;box-sizing:border-box;padding:0 3px 1px ${bare ? 0 : 11}px;position:relative;
        border-right:1px solid #fff;box-shadow:inset -1px 0 #808080;
        ${this.A('ml') ? `margin-left:${this.A('ml')}px;` : ''}${this.A('w') ? `width:${this.A('w')}px;` : ''}}
      .grip{position:absolute;left:4px;top:4px;bottom:4px;width:3px;border:1px solid;border-color:#fff #808080 #808080 #fff;box-sizing:border-box}
      .it{width:${this.A('pitch') || 23.4}px;display:flex;justify-content:center}
      .dd{width:36.4px;display:flex;align-items:center;padding-left:2.7px;box-sizing:border-box}
      .dd x-icon:last-child{margin-left:2px}
      .sep{width:7px;height:20px;display:block;position:relative}
      .sep::after{content:"";position:absolute;left:3px;top:0;bottom:0;width:1px;background:#808080;box-shadow:1px 0 #fff}
    </style>${bare ? '' : '<div class="grip"></div>'}${html}`);
  }
}

class XBtn extends Base {
  connectedCallback() {
    const w = this.A('w'), h = this.A('h'), dis = this.hasAttribute('dis'), pressed = this.hasAttribute('pressed');
    const body = this.A('icon') ? `<x-icon name="${this.A('icon')}" size="19"></x-icon>` : `<span>${T(this.A('text') || '')}</span>`;
    this.render(`<style>${MONO}
      :host{display:flex;flex:none;align-items:center;justify-content:center;width:${w}px;height:${h}px;overflow:hidden;
        ${pressed ? 'border:1px solid;border-color:#404040 #fff #fff #404040;box-sizing:border-box;background:#d4d0c8' : RAISED}}
      span{white-space:nowrap;${dis ? 'color:#808080;text-shadow:1px 1px #fff' : ''}${this.hasAttribute('under') ? ';text-decoration:underline' : ''}}
    </style>${body}`);
  }
}

class XCombo extends Base {
  connectedCallback() {
    this.render(`<style>${MONO}
      :host{display:flex;flex:none;width:${this.A('w')}px;height:${this.A('h') || 20}px;${SUNK}background:${this.A('bg') || '#d4d0c8'};align-items:center;overflow:hidden}
      .v{flex:1;padding:0 0 0 2px;overflow:hidden;white-space:nowrap;line-height:16px}
      .v .l{font-size:11px;letter-spacing:-.1px}
      .a{width:15px;align-self:stretch;margin:1px 1px 1px 0;${RAISED}display:flex;align-items:center;justify-content:center;flex:none}
      .s{width:0;height:0;border:4px solid transparent;border-top:5px solid #000;border-bottom:0}
    </style><div class="v">${T(this.A('value') || '')}</div><div class="a"><div class="s"></div></div>`);
  }
}

class XStrip extends Base {
  connectedCallback() {
    this.render(`<style>:host{display:flex;align-items:flex-end;height:27px;flex:none;background:#bdbdbd;box-sizing:border-box;padding-top:3px;padding-bottom:1px}</style><slot></slot>`);
  }
}

class XSidebar extends Base {
  connectedCallback() {
    const w = +this.A('w'), ix = +this.A('ix');
    const html = this.A('items').split(' ').map(i => {
      if (i === '-') return '<i class="ln"></i>';
      if (i === '_') return '<i class="ln short"></i>';
      if (i === '^') return '<i class="sp"></i>';
      if (i === '~') return '<i class="gap"></i>';
      const dd = i.endsWith('+'), tick = i.endsWith('!');
      const n = dd || tick ? i.slice(0, -1) : i;
      return `<div class="it"><x-icon name="${n}"></x-icon>${dd ? '<x-icon name="arrow" size="12"></x-icon>' : ''}${tick ? '<b></b>' : ''}</div>`;
    }).join('');
    this.render(`<style>
      :host{display:block;flex:none;width:${w}px;height:558px;overflow:hidden;box-sizing:border-box;padding-top:${this.A('top')}px;
        ${this.hasAttribute('light') ? 'border-left:1px solid #fff;' : 'border-right:1px solid #fff;box-shadow:inset -1px 0 #808080;'}}
      .it{height:22px;display:flex;align-items:center;padding-left:${ix - 9}px;}
      .it b{width:1px;height:18px;background:#808080;box-shadow:1px 0 #fff;margin-left:7px}
      .ln{display:block;height:8px;position:relative}
      .ln.short{height:5px}
      .ln::after{content:"";position:absolute;left:3px;right:3px;top:3px;height:1px;background:#808080;box-shadow:0 1px #fff}
      .sp{display:block;height:2px}
      .gap{display:block;height:49px}
    </style>${html}`);
  }
}

class XManager extends Base {
  connectedCallback() {
    this.render(`<style>${MONO}
      :host{display:flex;flex-direction:column;flex:none;width:364px;height:558px;box-sizing:border-box;padding:0 4px 0 5px;overflow:hidden}
      .head{height:19px;display:flex;align-items:center;justify-content:space-between;color:#404040;flex:none;padding-right:1px}
      .head b{font-weight:400;margin-left:1px;margin-top:1px}
      .ctl{display:flex;gap:8px;align-items:center;font:bold 10px "Liberation Mono",monospace}
      .tabs{display:flex;height:20px;flex:none;align-items:flex-end;margin-left:-4px;border-bottom:1px solid #fff;box-shadow:0 1px #808080}
      .tab{padding:0 6px;height:20px;line-height:18px;border:1px solid;border-color:#fff #404040 transparent #fff;box-sizing:border-box}
      .tab.on{width:62px;text-align:center;padding:0;margin-bottom:-1px;height:21px;background:#d4d0c8}
      .tab.off{height:18px;width:60px;white-space:nowrap;overflow:hidden;line-height:16px}
      .bar{display:flex;align-items:center;height:33px;flex:none;padding-left:4px;border-bottom:1px solid #808080;box-shadow:0 1px #fff}
      .bar i{width:7px;height:22px;position:relative}
      .bar i::after{content:"";position:absolute;left:3px;top:0;bottom:0;width:1px;background:#808080;box-shadow:1px 0 #fff}
      .bar x-icon{width:23px}
      .bar.b2{border:0;box-shadow:none;height:34px}
      .tree{flex:none;height:441px;width:355px;box-sizing:border-box;padding-right:2px;border-style:solid;border-width:2px;border-color:#808080 #d4d0c8 #fff #808080;background:#bfc0c2;display:grid;grid-template-columns:1fr 16px;grid-template-rows:1fr 15px;position:relative;}
      .list{overflow:hidden;padding-top:1px;min-width:0}
      .v{display:flex;flex-direction:column;background:repeating-conic-gradient(#d4d0c8 0 25%,#fff 0 50%) 0 0/2px 2px}
      .sb{width:16px;height:16px;${RAISED}display:flex;align-items:center;justify-content:center;flex:none}
      .th{height:190px;${RAISED}flex:none;}
      .h{display:flex;grid-column:1 / 2;background:#d4d0c8}
      .ht{flex:1;${RAISED}}
      .u{width:0;height:0;border:4px solid transparent;border-bottom:5px solid #000;border-top:0}
      .d{width:0;height:0;border:4px solid transparent;border-top:5px solid #000;border-bottom:0}
      .lf{width:0;height:0;border:4px solid transparent;border-right:5px solid #000;border-left:0}
      .rt{width:0;height:0;border:4px solid transparent;border-left:5px solid #000;border-right:0}
    </style>
    <div class="head"><b>刀具操作管理器</b><div class="ctl"><span>▼</span><span>X</span></div></div>
    <div class="tabs"><div class="tab on">刀具路径</div><div class="tab off">实体管理</div></div>
    <div class="bar"><x-icon name="gchk1"></x-icon><x-icon name="gchk2"></x-icon><i></i><x-icon name="gT1"></x-icon><x-icon name="gT2"></x-icon><i></i></div>
    <div class="bar b2"><x-icon name="glock"></x-icon><x-icon name="gwav"></x-icon><x-icon name="glock"></x-icon><i></i><x-icon name="gdown"></x-icon></div>
    <div class="tree">
      <div class="list"><slot></slot></div>
      <div class="v"><div class="sb"><div class="u"></div></div><div class="th"></div><div style="flex:1"></div><div class="sb"><div class="d"></div></div></div>
      <div class="h"><div class="sb"><div class="lf"></div></div><div class="ht"></div><div class="sb"><div class="rt"></div></div></div>
    </div>`);
  }
}

class XTreeRow extends Base {
  connectedCallback() {
    const L = +this.A('level'), exp = this.A('exp'), ic = 29 + 19 * L;
    const guides = [30, 49, 68].slice(0, L);
    const last = this.hasAttribute('last');
    const bg = guides.map((x, i) => {
      const half = last && i === 2;
      return `repeating-linear-gradient(to bottom,#a8a8e8 0 1px,transparent 1px 2px) ${x}px 0/1px ${half ? '50%' : '100%'} no-repeat`;
    }).join(',');
    const sel = this.hasAttribute('sel');
    this.render(`<style>${MONO}
      :host{display:flex;height:16px;align-items:center;${bg ? `background:${bg};` : ''}position:relative;white-space:nowrap}
      .pad{flex:none;width:${ic - 27}px}
      .zone{flex:none;width:18px;height:16px;position:relative;display:flex;align-items:center;justify-content:center}
      .zone::after{content:"";position:absolute;left:50%;right:0;top:8px;border-top:1px dotted #a8a8e8}
      .box{width:9px;height:9px;border:1px solid #8888d0;background:#d4d0c8;box-sizing:border-box;position:relative;z-index:1;font:10px/7px "Liberation Mono",monospace;text-align:center;color:#000}
      x-icon{width:18px}
      .lab{flex:1;display:flex;justify-content:space-between;margin-left:4px;min-width:0;overflow:hidden;line-height:16px;${sel ? 'background:#0a246a;color:#fff;' : ''}}
      .tail{flex:none}
    </style>
    <div class="pad"></div><div class="zone">${exp ? `<div class="box">${exp === '+' ? '+' : '−'}</div>` : ''}</div>
    <x-icon name="${this.A('icon')}" size="17"></x-icon>
    <div class="lab"><span>${T(this.A('label') || '')}</span><span class="tail">${T(this.A('tail') || '')}</span></div>`);
  }
}

class XViewport extends Base {
  connectedCallback() {
    this.render(`<style>:host{display:block;flex:none;width:930px;height:558px;background:#000}svg{display:block}</style>
    <svg width="930" height="558" viewBox="406 154 930 558">
      <defs>
        <linearGradient id="cy" gradientUnits="userSpaceOnUse" x1="877" y1="300" x2="844" y2="482">
          <stop offset="0" stop-color="#004400"/><stop offset=".1" stop-color="#006c00"/><stop offset=".45" stop-color="#008c00"/><stop offset=".8" stop-color="#007c00"/><stop offset="1" stop-color="#004c00"/>
        </linearGradient>
        <linearGradient id="back" gradientUnits="userSpaceOnUse" x1="770" y1="0" x2="990" y2="0">
          <stop offset="0" stop-color="#8c8c00"/><stop offset=".3" stop-color="#d0d000"/><stop offset=".5" stop-color="#fcfc00"/><stop offset="1" stop-color="#f0f000"/>
        </linearGradient>
        <linearGradient id="floor" gradientUnits="userSpaceOnUse" x1="720" y1="420" x2="800" y2="360">
          <stop offset="0" stop-color="#d8d800"/><stop offset=".3" stop-color="#ffff00"/><stop offset="1" stop-color="#ffff10"/>
        </linearGradient>
      </defs>
      <path d="M406 215L1336 384V568L406 398Z" fill="url(#cy)"/>
      <path d="M683 433C687 426 693 421 700 418L773 365L820 337C840 326 855 319 867 317C880 315 895 315 907 316L957 323L993 330C1003 333 1010 338 1010 342C1009 350 1002 356 990 360L960 353C940 349 930 348 917 348C905 348 897 348 890 350C880 353 875 356 867 362L840 382C825 393 812 403 800 410C790 415 782 416 773 420C755 430 740 442 723 451C712 451 690 445 683 433Z" fill="url(#back)"/>
      <path d="M700 418L773 367C800 355 830 345 860 342C880 340 895 340 907 340L957 347L990 358L960 353C940 349 930 348 917 348C905 348 897 348 890 350C880 353 875 356 867 362L840 382C825 393 812 403 800 410L790 413C770 412 750 418 730 424Z" fill="url(#floor)"/>
      <path d="M730 424C750 418 770 412 790 413C785 415 780 417 773 420C755 430 740 442 723 451Z" fill="#c0c000"/>
      <path d="M683 433C687 426 693 421 700 418L730 424L723 451C712 451 690 445 683 433Z" fill="#f4f400"/>
      <path d="M693 423L700 447L706 449L700 418Z" fill="#d0d000"/>
      <path d="M993 330C1003 333 1010 338 1010 342C1009 350 1002 356 990 360Z" fill="#e0e000"/>
    </svg>`);
  }
}

class XStatusbar extends Base {
  connectedCallback() {
    this.render(`<style>${MONO}
      :host{display:flex;align-items:center;height:30px;flex:none;box-sizing:border-box;border-top:1px solid #808080;border-bottom:1px solid #fff;padding:0 0 2px 515px;position:relative;overflow:hidden;box-shadow:inset 0 1px #fff}
      .c{height:24px;display:flex;align-items:center;justify-content:center;flex:none;${RAISED}white-space:nowrap;box-shadow:none;border-color:#fff #808080 #808080 #fff}
      .t{flex:none}
      .wm{position:absolute;left:1147px;top:8px;font:bold 16px/20px "Liberation Sans","Noto Sans CJK SC",sans-serif;color:#e01010;white-space:nowrap;letter-spacing:.3px;
        text-shadow:1px 0 #fff,-1px 0 #fff,0 1px #fff,0 -1px #fff,1px 1px #fff,-1px -1px #fff,1px -1px #fff,-1px 1px #fff;}
      .wm span{font-size:20px}
      .ar{width:0;height:0;border:5px solid transparent;border-top:8px solid #000;border-bottom:0}
      .q{color:#808080}
    </style>
    <div class="c" style="width:25px"><span class="l">3D</span></div>
    <div class="c" style="width:76px;margin-left:6px">屏幕视角</div>
    <div class="c" style="width:28px;margin-left:5px">平面</div>
    <div class="t" style="width:18px;margin-left:5px"><span class="l">Z</span></div>
    <x-combo value="0.0" w="110" bg="#ffff00" h="20"></x-combo>
    <div class="c" style="width:54px;height:22px;margin-left:5px;background:#00ff00;color:#606060"><span class="l">10</span></div>
    <div style="width:21px;display:flex;justify-content:center;flex:none"><div class="ar"></div></div>
    <div class="c" style="width:33px;border:0;background:none">层别</div>
    <x-combo value="1" w="156" bg="#fff" h="20" style="margin-left:3px"></x-combo>
    <div class="c" style="width:40px;margin-left:7px">属性</div>
    <x-combo value="*" w="30" bg="#fff" h="20" style="margin-left:5px"></x-combo>
    <x-combo value="" w="65" bg="#fff" h="20" style="margin-left:5px"></x-combo>
    <div class="c" style="width:48px;margin-left:4px;align-items:flex-start"><span class="l" style="line-height:14px">WCS</span></div>
    <div class="c" style="width:56px;margin-left:2px;align-items:flex-start;line-height:14px">群组</div>
    <div class="c" style="width:22px;margin-left:1px">↓</div>
    <div class="c q" style="width:21px">?</div>
    <div class="wm"><span>三维网</span>www.3dportal.cn</div>`);
  }
}

class XDialog extends Base {
  connectedCallback() {
    this.render(`<style>
      :host{display:block;position:absolute;left:153px;top:133px;width:220px;height:606px;box-sizing:border-box;background:#d4d0c8;z-index:5;
        border:1px solid;border-color:#d4d0c8 #404040 #404040 #d4d0c8;box-shadow:inset 1px 1px #fff,inset -1px -1px #808080}
      .bar{margin:1px 1px 0 1px;height:19px;box-sizing:border-box;background:linear-gradient(90deg,#808080,#c0c0c0);color:#d4d0c8;display:flex;align-items:center;justify-content:space-between;padding:0 2px 2px 3px;font-weight:700}
      .x{width:16px;height:14px;margin-top:2px;${RAISED}font:bold 11px/12px "Liberation Sans",sans-serif;color:#000;text-align:center}
    </style><div class="bar"><span>${this.A('text')}</span><div class="x">✕</div></div><slot></slot>`);
  }
}

class XFlow extends Base {
  connectedCallback() {
    this.render(`<style>:host{display:flex;${this.hasAttribute('center') ? 'align-items:center;' : ''}gap:${this.A('gap') || 0}px;margin:${this.A('mt') || 0}px 0 0 ${this.A('ml') || 0}px}</style><slot></slot>`);
  }
}

class XGroup extends Base {
  connectedCallback() {
    this.render(`<style>
      :host{display:block;margin:${this.A('mt')}px 0 0 12px;width:192px;height:${this.A('h')}px;box-sizing:border-box}
      fieldset{margin:0;padding:0 6px;height:100%;box-sizing:border-box;border:1px solid #808080;box-shadow:1px 1px #fff,inset 1px 1px #fff;min-width:0}
      legend{padding:0 3px;margin-left:5px;line-height:12px;height:12px}
    </style><fieldset><legend>${this.A('text')}</legend><slot></slot></fieldset>`);
  }
}

class XField extends Base {
  connectedCallback() {
    this.render(`<style>${MONO}
      :host{display:flex;align-items:center;justify-content:space-between;margin:${this.A('mt')}px 3px 0 16px;height:19px}
      .i{width:60px;height:19px;${SUNK}background:#ff0;padding-left:2px;line-height:16px}
    </style><span>${this.A('text')}</span><div class="i">${T(this.A('value'))}</div>`);
  }
}

class XLabel extends Base {
  connectedCallback() {
    const dis = this.hasAttribute('dis');
    this.render(`<style>:host{display:block;flex:none;${this.A('w') ? `width:${this.A('w')}px;` : ''}margin-left:${this.A('ml') || 0}px;${dis ? 'color:#808080;text-shadow:1px 1px #fff;' : ''}}</style>${this.A('text')}`);
  }
}

class XSlider extends Base {
  connectedCallback() {
    const w = +this.A('w'), big = this.hasAttribute('big'), ticks = this.hasAttribute('ticks'), x = +this.A('thumb');
    const mark = (t, c) => `<div style="position:absolute;left:2px;right:2px;top:${t}px;height:${t ? 1 : 3}px;background:repeating-linear-gradient(90deg,${c} 0 1px,transparent 1px 13.6px)"></div>`;
    this.render(`<style>
      :host{display:block;flex:none;position:relative;width:${w}px;height:${big ? 22 : 26}px}
      .tr{position:absolute;left:0;right:0;top:${big ? 10 : 12}px;height:2px;background:#808080;box-shadow:0 1px #fff}
      .th{position:absolute;left:${x}px;top:${big ? 0 : 2}px;width:10px;height:20px;${RAISED}
        ${big ? '' : 'background:repeating-conic-gradient(#d4d0c8 0 25%,#fff 0 50%) 0 0/2px 2px;'}}
    </style>${ticks ? mark(0, '#000') + mark(25, '#000') : ''}<div class="tr"></div><div class="th"></div>`);
  }
}

class XCheck extends Base {
  connectedCallback() {
    const on = this.hasAttribute('checked');
    this.render(`<style>
      :host{display:flex;align-items:center;height:16px;margin:${this.A('mt') || 0}px 0 0 ${this.A('ml') || 0}px;gap:5px}
      .b{width:12px;height:12px;${SUNK}background:#fff;flex:none;display:flex}
    </style><div class="b">${on ? '<svg width="10" height="10" viewBox="0 0 10 10"><path d="M1.500 4.500l2.500 2.500 4.500-5" fill="none" stroke="#000" stroke-width="1.800"/></svg>' : ''}</div><span>${this.A('text')}</span>`);
  }
}

class XInfobox extends Base {
  connectedCallback() {
    this.render(`<style>
      :host{display:block;margin:11px 0 0 12px;width:192px;height:77px;box-sizing:border-box;border:1px solid #808080;box-shadow:1px 1px #fff,inset 1px 1px #fff;padding:2px 0 0 4px}
    </style><slot></slot>`);
  }
}

class XInfo extends Base {
  connectedCallback() {
    this.render(`<style>${MONO}
      :host{display:flex;height:18px;line-height:18px}
      b{font-weight:400;width:67px;flex:none}
    </style><b>${this.A('k')}</b><span>${T(this.A('v'))}</span>`);
  }
}

class XProgress extends Base {
  connectedCallback() {
    this.render(`<style>${MONO}
      :host{display:block;margin:10px 0 0 88px;width:41px;height:20px;box-sizing:border-box;border:1px solid;border-color:#808080 #fff #fff #808080;box-shadow:inset 1px 1px #404040;text-align:right;color:#808080;line-height:18px;padding-right:1px}
      .l{line-height:18px}
    </style>${T(this.A('text'))}`);
  }
}

[['x-icon', XIcon], ['x-titlebar', XTitlebar], ['x-menubar', XMenubar], ['x-menu', XMenu], ['x-toolrow', XToolrow], ['x-grip', XGrip],
 ['x-toolbar', XToolbar], ['x-btn', XBtn], ['x-combo', XCombo], ['x-strip', XStrip], ['x-sidebar', XSidebar], ['x-manager', XManager],
 ['x-tree-row', XTreeRow], ['x-viewport', XViewport], ['x-statusbar', XStatusbar], ['x-dialog', XDialog], ['x-flow', XFlow],
 ['x-group', XGroup], ['x-field', XField], ['x-label', XLabel], ['x-slider', XSlider], ['x-check', XCheck], ['x-infobox', XInfobox],
 ['x-info', XInfo], ['x-progress', XProgress]].forEach(([n, c]) => customElements.define(n, c));
</script>
</body>
</html>
